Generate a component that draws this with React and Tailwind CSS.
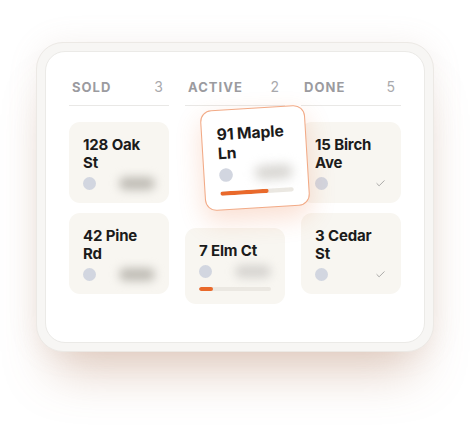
import React from "react";
import { Check } from "lucide-react";

const columns = [
  {
    name: "SOLD",
    count: 3,
    cards: [
      { title: ["128 Oak", "St"], blob: true },
      { title: ["42 Pine", "Rd"], blob: true },
    ],
  },
  {
    name: "ACTIVE",
    count: 2,
    cards: [
      { title: ["91 Maple", "Ln"], blob: true, progress: 65, dragging: true },
      { title: ["7 Elm Ct"], blob: true, progress: 20, faint: true },
    ],
  },
  {
    name: "DONE",
    count: 5,
    cards: [
      { title: ["15 Birch", "Ave"], done: true },
      { title: ["3 Cedar", "St"], done: true },
    ],
  },
];

function Card({ card }) {
  const base = card.dragging
    ? "relative z-10 bg-white border-[1.5px] border-[#f2aa86] shadow-[0_10px_24px_rgba(234,110,50,0.22)] translate-x-[20px] -translate-y-[12px] -rotate-[3.5deg] scale-[1.05]"
    : "bg-[#f8f6f1]";
  return (
    <div className={"rounded-[11px] px-[14px] pt-[14px] pb-[13px] " + base}>
      <p className="text-[15px] leading-[18px] font-bold text-[#1b1b1b] tracking-[-0.01em]">
        {card.title[0]}
        {card.title[1] && (
          <>
            <br />
            {card.title[1]}
          </>
        )}
      </p>
      <div className="mt-[5px] flex items-center justify-between h-[13px]">
        <div className="w-[13px] h-[13px] rounded-full bg-[#d2d6e0]" />
        {card.blob && (
          <div
            className={
              "h-[13px] w-[36px] rounded-full blur-[5px] " +
              (card.dragging || card.faint ? "bg-[#d6d4d0]" : "bg-[#bfbcb5]")
            }
          />
        )}
        {card.done && (
          <Check size={11} strokeWidth={1.6} className="text-[#8c8c8c] mr-[1px]" />
        )}
      </div>
      {card.progress !== undefined && (
        <div className="mt-[9px] h-[4px] rounded-full bg-[#ebe8e2] overflow-hidden">
          <div
            className="h-full rounded-full bg-[#e9692b]"
            style={{ width: card.progress + "%" }}
          />
        </div>
      )}
    </div>
  );
}

export default function App() {
  return (
    <div
      className="w-[470px] h-[444px] bg-white overflow-hidden pt-[42px] pl-[36px]"
      style={{ fontFamily: "Inter, 'Noto Sans', sans-serif" }}
    >
      <div className="w-[398px] h-[310px] rounded-[27px] bg-[#f7f6f4] border border-[#ece9e5] p-[8px] shadow-[0_36px_50px_-18px_rgba(170,110,75,0.35),0_0_30px_rgba(180,150,130,0.12)]">
        <div className="h-full rounded-[20px] bg-white border border-[#ebeae7] px-[23px] pt-[24px]">
          <div className="grid grid-cols-3 gap-[16px]">
            {columns.map((col) => (
              <div key={col.name} className="flex flex-col">
                <div className="flex items-baseline justify-between pl-[3px] pr-[6px] pb-[7px] border-b border-[#e9e8e6]">
                  <span className="text-[13px] font-bold tracking-[0.08em] text-[#9b9b9f]">
                    {col.name}
                  </span>
                  <span className="text-[14px] text-[#a9a9ac]">{col.count}</span>
                </div>
                <div className="mt-[16px] flex flex-col gap-[10px]">
                  {col.cards.map((c) => (
                    <Card key={c.title[0]} card={c} />
                  ))}
                </div>
              </div>
            ))}
          </div>
        </div>
      </div>
    </div>
  );
}
